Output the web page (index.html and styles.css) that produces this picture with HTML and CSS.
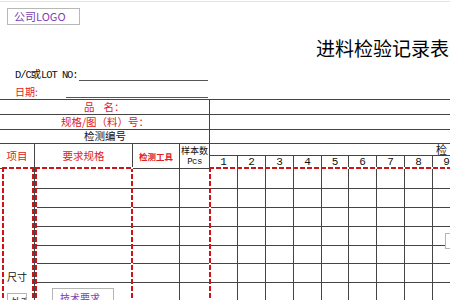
FILE: index.html
```html
<!DOCTYPE html>
<html lang="zh-CN">
<head>
<meta charset="utf-8">
<title>进料检验记录表</title>
<link rel="stylesheet" href="styles.css">
</head>
<body>
<div class="sheet">
  <header class="head">
    <div class="logo">公司LOGO</div>
    <h1 class="title">进料检验记录表</h1>
    <div class="field dc"><span class="label mono"><span class="tight">D/C</span>或<span class="tight">LOT NO:</span></span><span class="line l1"></span></div>
    <div class="field date"><span class="label red">日期:</span><span class="line l2"></span></div>
  </header>
  <div class="table-wrap">
    <div class="grid">
      <div class="c info name"><span class="red">品</span><i class="gap"></i><span class="red">名：</span></div>
      <div class="c wide"></div>
      <div class="c info spec red">规格/图（料）号：</div>
      <div class="c wide"></div>
      <div class="c info code">检测编号</div>
      <div class="c wide"></div>

      <div class="c hd red">项目</div>
      <div class="c hd red">要求规格</div>
      <div class="c hd red tool">检测工具</div>
      <div class="c hd qty"><span>样本数</span><span class="mono pcs">Pcs</span></div>
      <div class="c chk">检验记录</div>
      <div class="c num">1</div><div class="c num">2</div><div class="c num">3</div><div class="c num">4</div><div class="c num">5</div><div class="c num">6</div><div class="c num">7</div><div class="c num">8</div><div class="c num">9</div>

      <div class="c size">尺寸</div>
      <i class="c"></i><i class="c"></i><i class="c"></i><i class="c"></i><i class="c"></i><i class="c"></i><i class="c"></i><i class="c"></i><i class="c"></i><i class="c"></i><i class="c"></i><i class="c"></i>
      <i class="c"></i><i class="c"></i><i class="c"></i><i class="c"></i><i class="c"></i><i class="c"></i><i class="c"></i><i class="c"></i><i class="c"></i><i class="c"></i><i class="c"></i><i class="c"></i>
      <i class="c"></i><i class="c"></i><i class="c"></i><i class="c"></i><i class="c"></i><i class="c"></i><i class="c"></i><i class="c"></i><i class="c"></i><i class="c"></i><i class="c"></i><i class="c"></i>
      <i class="c"></i><i class="c"></i><i class="c"></i><i class="c"></i><i class="c"></i><i class="c"></i><i class="c"></i><i class="c"></i><i class="c"></i><i class="c"></i><i class="c"></i><i class="c"></i>
      <i class="c"></i><i class="c"></i><i class="c"></i><i class="c"></i><i class="c"></i><i class="c"></i><i class="c"></i><i class="c"></i><i class="c"></i><i class="c"></i><i class="c"></i><i class="c"></i>
      <i class="c"></i><i class="c"></i><i class="c"></i><i class="c"></i><i class="c"></i><i class="c"></i><i class="c"></i><i class="c"></i><i class="c"></i><i class="c"></i><i class="c"></i><i class="c"></i>
      <i class="c"></i><i class="c"></i><i class="c"></i><i class="c"></i><i class="c"></i><i class="c"></i><i class="c"></i><i class="c"></i><i class="c"></i><i class="c"></i><i class="c"></i><i class="c"></i>
      <i class="c"></i><i class="c"></i><i class="c"></i><i class="c"></i><i class="c"></i><i class="c"></i><i class="c"></i><i class="c"></i><i class="c"></i><i class="c"></i><i class="c"></i><i class="c"></i>
    </div>
    <div class="marq m1"></div>
    <div class="marq m2"></div>
    <div class="marq m3"></div>
    <div class="shape tech">技术要求</div>
    <div class="shape obs">外观</div>
    <div class="shape rbox"></div>
  </div>
</div>
</body>
</html>
```
FILE: styles.css
```css
* { box-sizing: border-box; margin: 0; padding: 0; }
html, body { background: #fff; overflow: hidden; }
body {
  width: 450px;
  height: 300px;
  font-family: "Noto Sans CJK SC", "Liberation Sans", sans-serif;
  color: #111;
}
.sheet { width: 461px; }
.red { color: #e0201c; }
.mono { font-family: "Liberation Mono", "Noto Sans CJK SC", monospace; }

.head {
  height: 98px;
  margin-top: 1px;
  border-top: 1px solid #e4e4e4;
  display: flex;
  flex-direction: column;
  align-items: flex-start;
}
.logo {
  margin: 6px 0 0 7px;
  width: 73px;
  height: 17px;
  border: 1px solid #b8b8b8;
  padding-left: 6px;
  font-size: 11px;
  line-height: 15px;
  color: #7b3fb5;
}
.title {
  margin-top: 12px;
  padding-left: 316px;
  font-size: 19px;
  line-height: 22px;
  font-weight: 400;
  white-space: nowrap;
  color: #000;
}
.field { display: flex; align-items: flex-end; }
.field.dc { margin-top: 10px; height: 12px; }
.field.date { margin-top: 3px; height: 14px; }
.label {
  white-space: nowrap;
  padding-left: 15px;
  font-size: 10.5px;
  line-height: 12px;
}
.dc .label { width: 79px; }
.tight { letter-spacing: -1.1px; }
.date .label { width: 66px; font-size: 10px; font-family: "Noto Sans CJK SC", "Liberation Mono", monospace; }
.line { height: 12px; border-bottom: 1px solid #555; }
.l1 { width: 129px; }
.l2 { width: 142px; }

.table-wrap { position: relative; }
.grid {
  display: grid;
  grid-template-columns: 35px 98px 47px 30px 28px 28px 28px 28px 27px 28px 28px 28px 28px;
  grid-template-rows: 15px 15px 14px 12px 13px 20px 19px 19px 19px 18px 19px 19px 19px;
  border-top: 1px solid #444;
}
.c {
  border-right: 1px solid #444;
  border-bottom: 1px solid #444;
  display: flex;
  align-items: center;
  justify-content: center;
  font-size: 10px;
  line-height: 1;
  white-space: nowrap;
}
.info { grid-column: 1 / span 4; justify-content: flex-start; font-size: 10.5px; }
.wide { grid-column: 5 / span 9; }
.name { padding-left: 84px; }
.gap { display: inline-block; width: 9px; }
.spec { padding-left: 61px; }
.code { padding-left: 84px; color: #111; }
.hd { grid-row: span 2; font-size: 10.5px; }
.tool { font-size: 8.5px; font-weight: 700; }
.qty { flex-direction: column; font-size: 9px; gap: 3px; padding-top: 1px; }
.pcs { font-size: 9px; letter-spacing: -0.5px; }
.chk {
  grid-column: 5 / span 9;
  justify-content: flex-start;
  padding-left: 226px;
  font-size: 11px;
  letter-spacing: 6px;
  overflow: hidden;
}
.num { font-family: "Liberation Mono", monospace; font-size: 11px; padding-top: 1px; }
.size {
  grid-column: 1;
  grid-row: 6 / span 8;
  align-items: flex-start;
  padding-top: 103px;
  font-size: 10px;
}

.marq {
  position: absolute;
  top: 68px;
  height: 240px;
  pointer-events: none;
  background:
    repeating-linear-gradient(90deg, #cc141a 0 5px, #fff 5px 7px) 0 0 / 100% 2px no-repeat,
    repeating-linear-gradient(180deg, #cc141a 0 5px, #fff 5px 7px) 0 0 / 2px 100% no-repeat,
    repeating-linear-gradient(180deg, #cc141a 0 5px, #fff 5px 7px) 100% 0 / 2px 100% no-repeat;
}
.m1 { left: 2px; width: 32px; }
.m2 { left: 35px; width: 98px; }
.m3 { left: 209px; width: 260px; }

.shape {
  position: absolute;
  background: #fff;
  border: 1px solid #b5b5b5;
  font-size: 10px;
  line-height: 12px;
  white-space: nowrap;
  overflow: hidden;
}
.tech { left: 52px; top: 189px; width: 62px; height: 20px; padding: 3px 0 0 7px; color: #7b3fb5; }
.obs { left: 7px; top: 194px; width: 20px; height: 16px; padding: 2px 0 0 3px; color: #333; }
.rbox { left: 445px; top: 134px; width: 12px; height: 16px; }
```
